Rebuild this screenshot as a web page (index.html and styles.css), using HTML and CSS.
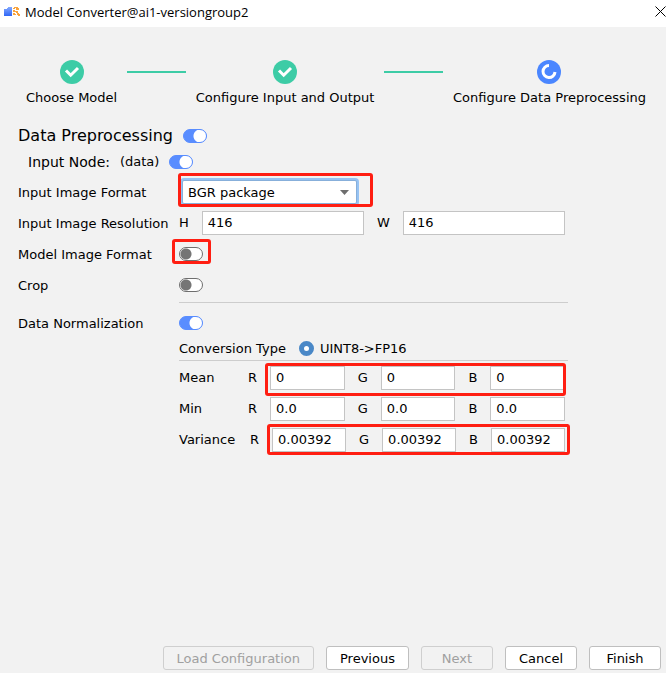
FILE: index.html
```html
<!DOCTYPE html>
<html lang="en">
<head>
<meta charset="utf-8">
<title>Model Converter</title>
<link rel="stylesheet" href="styles.css">
</head>
<body>
<header class="titlebar">
  <svg class="app-icon" width="17" height="12" viewBox="0 0 17 12" aria-hidden="true">
    <defs><linearGradient id="blue" x1="0" y1="0" x2="0" y2="1"><stop offset="0" stop-color="#84a9ff"/><stop offset="1" stop-color="#2f66f6"/></linearGradient></defs>
    <path d="M0 3h3V2h1V1h4v9H0z" fill="url(#blue)"/>
    <path d="M10 1h4v1h-4zM9 2h2v1H9zM12 2h3v2h-3zM9 4h2v1h2v1h-4zM12 5h2v2h-2zM9 7h2v2H9zM13 7h2v1h1v2h-2V9h-1zM11 8h1v1h-1z" fill="#f9a33c"/>
  </svg>
  <h1 class="window-title">Model Converter@ai1-versiongroup2</h1>
  <button class="close" type="button" aria-label="Close">
    <svg width="11" height="11" viewBox="0 0 11 11" aria-hidden="true"><path d="M.5.5l10 10M10.5.5l-10 10" stroke="#000" fill="none"/></svg>
  </button>
</header>

<main class="content">
  <ol class="steps">
    <li class="step">
      <svg width="24" height="24" viewBox="0 0 24 24" aria-hidden="true"><circle cx="12" cy="12" r="12" fill="#3dcca6"/><path d="M6 10.500l4.700 4.700L18 8" fill="none" stroke="#fff" stroke-width="3"/></svg>
      <span>Choose Model</span>
    </li>
    <li class="step-line" aria-hidden="true"></li>
    <li class="step">
      <svg width="24" height="24" viewBox="0 0 24 24" aria-hidden="true"><circle cx="12" cy="12" r="12" fill="#3dcca6"/><path d="M6 10.500l4.700 4.700L18 8" fill="none" stroke="#fff" stroke-width="3"/></svg>
      <span>Configure Input and Output</span>
    </li>
    <li class="step-line" aria-hidden="true"></li>
    <li class="step">
      <svg width="24" height="24" viewBox="0 0 24 24" aria-hidden="true"><circle cx="12" cy="12" r="12" fill="#4a86ff"/><path d="M12 5.500a6 6 0 1 0 6 6.500" fill="none" stroke="#fff" stroke-width="3"/></svg>
      <span>Configure Data Preprocessing</span>
    </li>
  </ol>

  <form class="form" id="preprocess">
    <div class="heading">
      <label for="pre">Data Preprocessing</label>
      <input class="toggle" type="checkbox" id="pre" checked>
    </div>
    <div class="node">
      <label for="node">Input Node:</label>
      <span class="node-name">(data)</span>
      <input class="toggle" type="checkbox" id="node" checked>
    </div>

    <div class="fields">
      <label class="name" for="format">Input Image Format</label>
      <div class="field">
        <div class="select-box mark mark-select">
          <select id="format"><option>BGR package</option></select>
          <svg class="arrow" width="9" height="5" viewBox="0 0 9 5" aria-hidden="true"><path d="M0 0h9L4.500 5z" fill="#6e6e6e"/></svg>
        </div>
      </div>

      <span class="name">Input Image Resolution</span>
      <div class="field inset">
        <label for="h">H</label><input class="text" id="h" type="text" value="416">
        <label for="w">W</label><input class="text" id="w" type="text" value="416">
      </div>

      <label class="name" for="model">Model Image Format</label>
      <div class="field"><span class="mark mark-toggle"><input class="toggle" type="checkbox" id="model"></span></div>

      <label class="name" for="crop">Crop</label>
      <div class="field"><input class="toggle" type="checkbox" id="crop"></div>
    </div>

    <div class="normalization">
      <hr>
      <label class="norm-label" for="norm">Data Normalization</label>
      <div class="field norm-switch"><input class="toggle" type="checkbox" id="norm" checked></div>
      <div class="field conversion">
        <span class="name">Conversion Type</span>
        <label class="choice"><input type="radio" name="type" checked><span class="name">UINT8-&gt;FP16</span></label>
      </div>
      <hr>
      <div class="channels">
        <div class="field inset">
          <span class="stat">Mean</span>
          <label for="mr">R</label>
          <div class="values mark mark-mean">
            <input class="text" id="mr" type="text" value="0">
            <label for="mg">G</label><input class="text" id="mg" type="text" value="0">
            <label for="mb">B</label><input class="text" id="mb" type="text" value="0">
          </div>
        </div>
        <div class="field inset">
          <span class="stat">Min</span>
          <label for="nr">R</label>
          <div class="values">
            <input class="text" id="nr" type="text" value="0.0">
            <label for="ng">G</label><input class="text" id="ng" type="text" value="0.0">
            <label for="nb">B</label><input class="text" id="nb" type="text" value="0.0">
          </div>
        </div>
        <div class="field inset">
          <span class="stat stat-wide">Variance</span>
          <label for="vr">R</label>
          <div class="values mark mark-variance">
            <input class="text" id="vr" type="text" value="0.00392">
            <label for="vg">G</label><input class="text" id="vg" type="text" value="0.00392">
            <label for="vb">B</label><input class="text" id="vb" type="text" value="0.00392">
          </div>
        </div>
      </div>
    </div>
  </form>
</main>

<footer class="actions">
  <button class="btn" type="button" disabled>Load Configuration</button>
  <button class="btn" type="button">Previous</button>
  <button class="btn" type="button" disabled>Next</button>
  <button class="btn" type="button">Cancel</button>
  <button class="btn" type="submit" form="preprocess">Finish</button>
</footer>
</body>
</html>
```
FILE: styles.css
```css
* { box-sizing: border-box; }

body {
  margin: 0;
  min-height: 100vh;
  display: flex;
  flex-direction: column;
  background: #f2f2f2;
  color: #000;
  font: 13px/16px "DejaVu Sans", sans-serif;
}

input, select, button { font: inherit; color: inherit; margin: 0; }

.titlebar {
  display: flex;
  align-items: center;
  height: 27px;
  padding: 0 0 4px 4px;
  gap: 4px;
  background: #fff;
}

.window-title {
  flex: 1;
  margin: 0;
  font: 13px/18px "Open Sans", "Noto Sans", sans-serif;
}

.close { display: flex; padding: 0; border: 0; background: none; }

.content { flex: 1; }

.steps {
  display: flex;
  gap: 10px;
  margin: 0;
  padding: 33px 20px 0 26px;
  list-style: none;
  white-space: nowrap;
}

.step { display: flex; flex-direction: column; align-items: center; gap: 6px; }

.step-line { width: 60px; height: 2px; margin-top: 11px; background: #3dcca6; }

.form { padding: 17px 98px 0 18px; }

.heading, .node { display: flex; align-items: center; gap: 10px; height: 26px; }
.heading { font-size: 16px; }
.node { padding-left: 10px; }
.node label { font-size: 14px; }

.toggle {
  appearance: none;
  display: block;
  flex: none;
  width: 24px;
  height: 14px;
  border: 1px solid #6e6e6e;
  border-radius: 7px;
  background: radial-gradient(circle at 6px 6px, #757575 5px, transparent 6px) #fff;
}

.toggle:checked {
  border-color: #598dff;
  background: radial-gradient(circle at 16px 6px, #fff 6px, transparent 7px) #598dff;
}

.fields {
  display: grid;
  grid-template-columns: 161px 1fr;
  row-gap: 7px;
  align-items: center;
  padding-top: 5px;
  white-space: nowrap;
}

.name { padding-top: 2px; }

.field { display: flex; align-items: center; gap: 13px; height: 24px; }
.inset { padding-right: 3px; }

.text {
  flex: 1;
  min-width: 0;
  width: 0;
  height: 24px;
  padding: 0 5px 2px;
  border: 1px solid #c4c4c4;
  border-radius: 0;
  background: #fff;
}

.select-box { width: 45%; margin-left: 3px; }

.select-box select {
  appearance: none;
  display: block;
  width: 100%;
  height: 24px;
  padding: 2px 20px 0 5px;
  border: 1px solid #87afda;
  border-radius: 2px;
  background: #fff;
  box-shadow: 0 0 0 2px #97c3f3;
}

.arrow { position: absolute; right: 8px; top: 10px; pointer-events: none; }

.normalization {
  display: grid;
  grid-template-columns: 161px 1fr;
  padding-top: 5px;
}

hr {
  grid-column: 2;
  width: 100%;
  height: 1px;
  margin: 0;
  border: 0;
  background: #cdcdcd;
}

.norm-label { grid-column: 1; margin-top: 13px; }
.norm-switch { margin-top: 8px; }
.conversion { grid-column: 2; margin: 1px 0 0; }

.choice { display: flex; align-items: center; gap: 6px; }

.choice input {
  appearance: none;
  width: 15px;
  height: 15px;
  border: 5px solid #4a88c7;
  border-radius: 50%;
  background: #fff;
}

.channels { grid-column: 2; display: grid; gap: 7px; padding-top: 5px; }
.stat { min-width: 56px; }
.stat-wide { min-width: 58px; }
.values { flex: 1; display: flex; align-items: center; gap: 13px; }

.mark { position: relative; }

.mark::after {
  content: "";
  position: absolute;
  border: 3px solid #ff1e12;
  border-radius: 3px;
  pointer-events: none;
}

.mark-select::after { inset: -7px -16px -3px -4px; }
.mark-toggle::after { inset: -8px -8px -3px -7px; }
.mark-mean::after { inset: -3px -1px -6px -5px; }
.mark-variance::after { inset: -4px -5px -3px -5px; }

.actions { display: flex; justify-content: flex-end; gap: 12px; padding: 0 5px 3px; }

.btn {
  min-width: 72px;
  height: 24px;
  padding: 2px 13px 0;
  border: 1px solid #bfbfbf;
  border-radius: 3px;
  background: #fff;
  white-space: nowrap;
}

.btn:disabled { border-color: #cfcfcf; background: transparent; color: #a0a0a0; }
```
